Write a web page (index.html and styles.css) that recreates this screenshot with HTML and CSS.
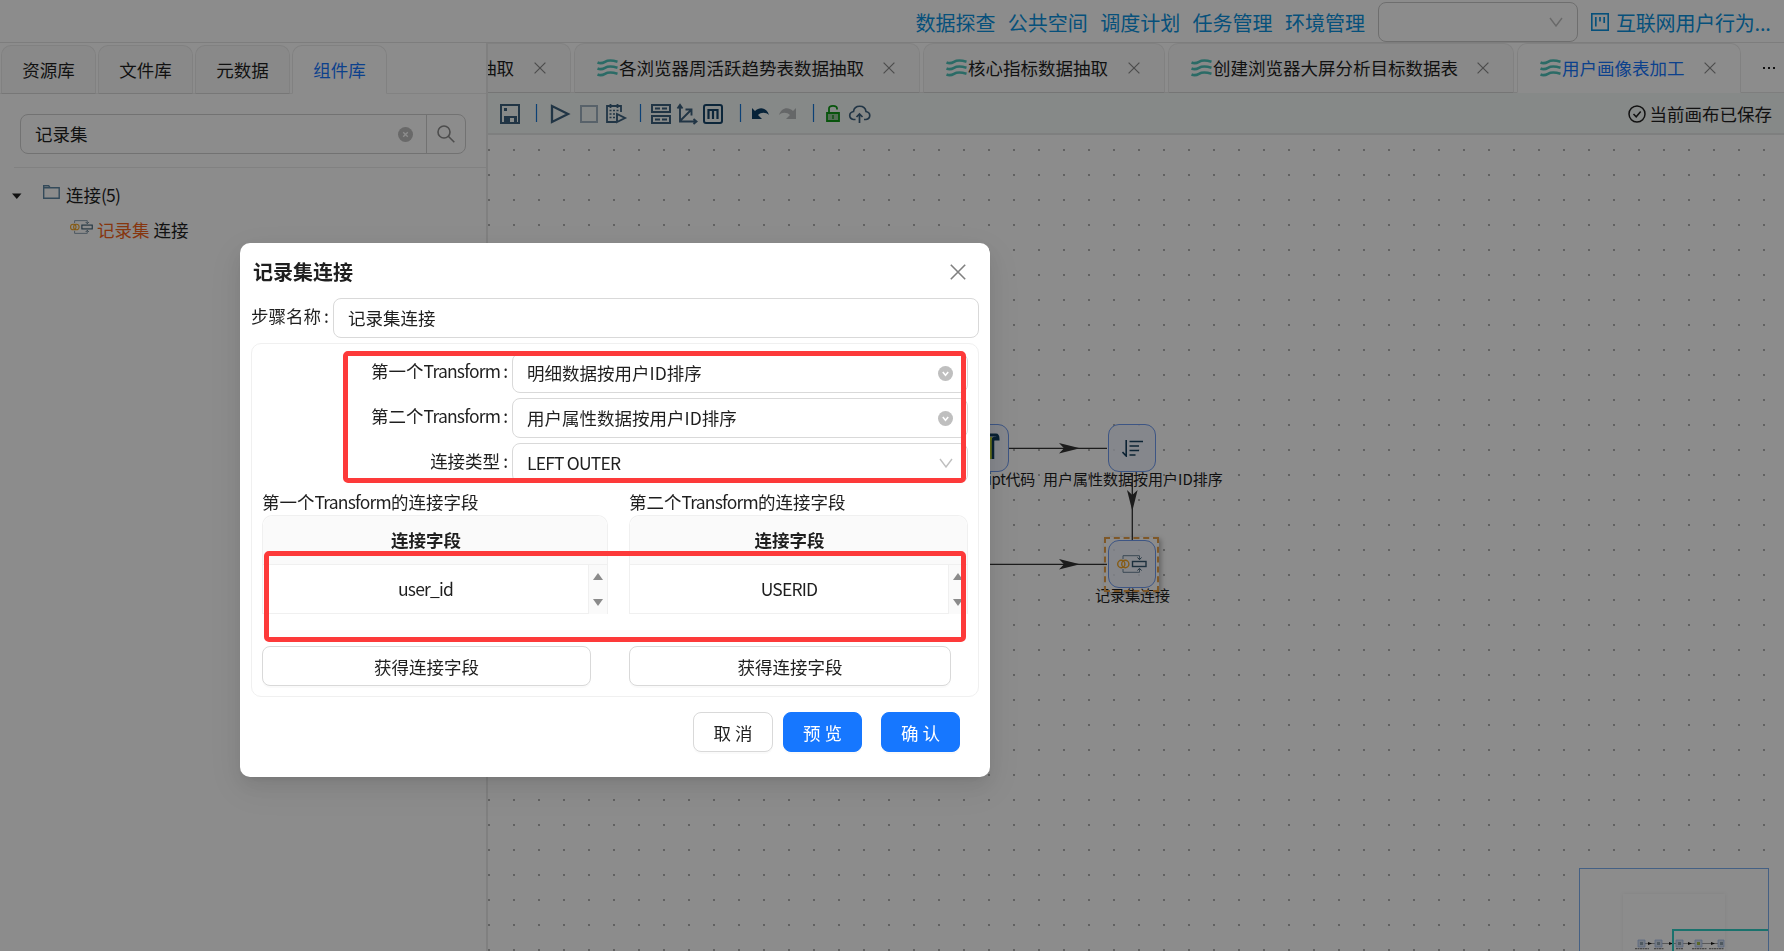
FILE: index.html
```html
<!DOCTYPE html>
<html lang="zh-CN">
<head>
  <meta charset="UTF-8">
  <title>用户画像表加工</title>
  <link rel="stylesheet" href="styles.css">
</head>
<body>

  <!-- shared icons -->
  <svg class="defs">
    <symbol id="wave" viewBox="0 0 21 18">
      <path d="M.5 3.500C3.500 4.800 5.500 4.300 8 2.800S14 .800 20.500 2.800M.5 9.500C3.500 10.800 5.500 10.300 8 8.800S14 6.800 20.500 8.800M.5 15.500C3.500 16.800 5.500 16.300 8 14.800S14 12.800 20.500 14.800" fill="none" stroke="#4fc4bb" stroke-width="2.600"/>
    </symbol>
    <symbol id="close" viewBox="0 0 12 12">
      <path d="M.6.6l10.800 10.800M11.400.6L.6 11.400" fill="none" stroke="currentColor" stroke-width="1.200"/>
    </symbol>
    <symbol id="down" viewBox="0 0 14 10">
      <path d="M1 1l6 8 6-8" fill="none" stroke="currentColor" stroke-width="1.400"/>
    </symbol>
    <symbol id="down-circle" viewBox="0 0 15 15">
      <circle cx="7.500" cy="7.500" r="7.500" fill="#bfbfbf"/>
      <path d="M4.800 6l2.700 3.200L10.200 6" fill="none" stroke="#fff" stroke-width="1.600"/>
    </symbol>
    <symbol id="join" viewBox="0 0 30 18">
      <g fill="none" stroke-width="1.400">
        <ellipse cx="4.300" cy="9" rx="3.600" ry="3.700" stroke="#f5a623"/>
        <ellipse cx="8.300" cy="9" rx="3.600" ry="3.700" stroke="#f5a623"/>
        <path d="M6 4V.7h16.500V4M6 14v3.300h16.500V14" stroke="#6b8499" stroke-width="1"/>
        <path d="M20.500 2.500l2 2.200 2-2.200M20.500 15.500l2-2.200 2 2.200" stroke="#35586f" stroke-width="1"/>
        <rect x="15.500" y="6.500" width="13.500" height="5" stroke="#35586f"/>
      </g>
    </symbol>
  </svg>

  <div class="app">
    <header class="header">
      <nav class="nav">
        <a>数据探查</a><a>公共空间</a><a>调度计划</a><a>任务管理</a><a>环境管理</a>
      </nav>
      <div class="env-select"><svg width="14" height="10"><use href="#down"/></svg></div>
      <a class="project">
        <svg width="18" height="18" viewBox="0 0 18 18" fill="none" stroke="currentColor"><rect x=".8" y=".8" width="16.400" height="16.400" stroke-width="1.600"/><path d="M4.800 4v9.500M9 4v4.500M13.200 4v6" stroke-width="1.700"/></svg>
        <span>互联网用户行为...</span>
      </a>
    </header>

    <div class="main">
      <aside class="sidebar">
        <div class="side-tabs">
          <div class="side-tab">资源库</div>
          <div class="side-tab">文件库</div>
          <div class="side-tab">元数据</div>
          <div class="side-tab active">组件库</div>
        </div>
        <div class="search">
          <span class="search-text">记录集</span>
          <svg class="search-clear" width="15" height="15" viewBox="0 0 15 15"><circle cx="7.500" cy="7.500" r="7.500" fill="#bfbfbf"/><path d="M5.200 5.200l4.600 4.600M9.800 5.200L5.200 9.800" stroke="#fff" stroke-width="1.400"/></svg>
          <span class="search-btn">
            <svg width="18" height="18" viewBox="0 0 18 18" fill="none" stroke="#8c8c8c" stroke-width="1.600"><circle cx="7" cy="7" r="6"/><path d="M11.300 11.300l6 6"/></svg>
          </span>
        </div>
        <div class="tree">
          <div class="tree-row">
            <svg class="caret" width="10" height="6"><path d="M0 .5h9.500L4.800 6z" fill="#1f1f1f"/></svg>
            <svg class="folder" width="17" height="14" viewBox="0 0 17 14" fill="none" stroke="#5f88a5" stroke-width="1.400"><path d="M.7 13.300V.8h5l1.500 2h9v10.500zM.7 2.800h6"/></svg>
            <span>连接<b>(5)</b></span>
          </div>
          <div class="tree-row child">
            <svg width="23" height="14"><use href="#join"/></svg>
            <span><em>记录集</em> 连接</span>
          </div>
        </div>
      </aside>

      <section class="work">
        <div class="tabs">
          <div class="tab tab-cut"><span>抽取</span><svg class="x"><use href="#close"/></svg></div>
          <div class="tab tab-long"><svg class="wave"><use href="#wave"/></svg><span>各浏览器周活跃趋势表数据抽取</span><svg class="x"><use href="#close"/></svg></div>
          <div class="tab tab-mid"><svg class="wave"><use href="#wave"/></svg><span>核心指标数据抽取</span><svg class="x"><use href="#close"/></svg></div>
          <div class="tab tab-long"><svg class="wave"><use href="#wave"/></svg><span>创建浏览器大屏分析目标数据表</span><svg class="x"><use href="#close"/></svg></div>
          <div class="tab active"><svg class="wave"><use href="#wave"/></svg><span>用户画像表加工</span><svg class="x"><use href="#close"/></svg></div>
          <div class="more"><i></i><i></i><i></i></div>
        </div>

        <div class="toolbar">
          <svg class="tools" width="400" height="30" viewBox="0 0 400 30" fill="none" stroke="#3c617e" stroke-width="2">
            <!-- save -->
            <path d="M13 6h18v18H13z"/>
            <path d="M16 9h3v3h-3zM16 17h13v7h-3v-5h-4v5h-6z" fill="#3c617e" stroke="none"/>
            <path d="M48.500 5v18M152.500 5v18M252.500 5v18M325.500 5v18" stroke="#1677d8" stroke-width="1.200"/>
            <!-- run, stop, schedule -->
            <path d="M64 7v16l16-8z" stroke-width="2.300"/>
            <path d="M93 7h16v16H93z" stroke="#a1b3c2"/>
            <path d="M133 13V7h-14v16h9M122.500 5v4M129.500 5v4" stroke-width="1.800"/>
            <path d="M121.500 11.500h2M125 11.500h2M128.500 11.500h2M121.500 15h2M125 15h2M121.500 18.500h2M125 18.500h2" stroke-width="1.600"/>
            <path d="M129 15v8l8-4z" stroke-width="1.900"/>
            <!-- table, axes, mapping -->
            <path d="M164 6h18v7h-18zM164 17h18v7h-18zM167 9.500h5M174 9.500h5M167 20.500h5M174 20.500h5"/>
            <path d="M192 7v15.500h16M192 22l11-11M189.500 9.500L192 6l2.500 3.500M205.500 20l3 2.500-3 2.500M197.500 10.500h6v6" stroke-width="1.900"/>
            <rect x="216" y="6" width="18" height="18" rx="2" stroke="#17456a"/>
            <path d="M220.500 20v-9h9v9M225 11v9" stroke="#17456a" stroke-width="2.200"/>
            <!-- undo, redo -->
            <path d="M264 9v11h10l-4-4c3-3 8-3 11 0-2-7-9-9-14-4z" fill="#0d4068" stroke="none"/>
            <path d="M308 9v11h-10l4-4c-3-3-8-3-11 0 2-7 9-9 14-4z" fill="#b8bcbe" stroke="none"/>
            <!-- unlock, upload -->
            <path d="M339 14h12v8h-12z" fill="#9ac99d" stroke="none"/>
            <path d="M339 14h12v8h-12zM341 14V9.500c0-3.500 8-3.500 8 0v1" stroke="#0f9a17" stroke-width="1.800"/>
            <path d="M345 16v4" stroke="#0f8515" stroke-width="1.300"/>
            <path d="M367.500 20.500h-2c-5-1-5-7 0-8 1-7 11.500-7 12.500 0 5 1 5 7 0 8h-2M371.500 24v-8.500M368.500 18l3-3 3 3" stroke-width="1.700"/>
          </svg>
          <div class="saved">
            <svg width="18" height="18" viewBox="0 0 18 18" fill="none" stroke="#1f1f1f" stroke-width="1.500"><circle cx="9" cy="9" r="8"/><path d="M5.500 9l2.700 2.800 4.500-5.300"/></svg>
            <span>当前画布已保存</span>
          </div>
        </div>

        <div class="canvas">
          <div class="node node-js">
            <svg width="48" height="48" viewBox="0 0 48 48"><path d="M27 13v22" stroke="#b6c92d" stroke-width="8"/><path d="M32 35V17c0-4 4-4 5-2" fill="none" stroke="#0d3a5c" stroke-width="2.500"/><path d="M22 11h13c2 0 2 2 2 4h-6" fill="none" stroke="#0d3a5c" stroke-width="3"/></svg>
          </div>
          <div class="node node-sort">
            <svg width="21" height="17" viewBox="0 0 21 17" fill="none" stroke="#17405f" stroke-width="1.600"><path d="M4.200 0v16L.5 12M7.500 1.500H21M7.500 6h9.500M7.500 10.500H17M7.500 15h6"/></svg>
          </div>
          <div class="node node-join"><svg width="30" height="18"><use href="#join"/></svg></div>
          <svg class="edges" width="1296" height="816" fill="none" stroke="#333" stroke-width="1.300">
            <path d="M521 313.300h98M480 429.300h139M644.300 338v67"/>
            <path d="M571 308l21 5.300-21 5.300 5-5.300zM571 424l21 5.300-21 5.300 5-5.300zM639 355l5.300 21 5.300-21-5.300 5z" fill="#333" stroke="none"/>
          </svg>
          <div class="label label-js">JavaScript代码</div>
          <div class="label label-sort">用户属性数据按用户ID排序</div>
          <div class="label label-join">记录集连接</div>
          <div class="selection"></div>

          <div class="minimap">
            <div class="mini-page"></div>
            <svg width="110" height="14" viewBox="0 0 110 14">
              <path d="M5 4.500h84" stroke="#777" stroke-width=".7"/>
              <path d="M14 3l4 1.500L14 6zM35 3l4 1.500L35 6zM54 3l4 1.500L54 6zM77 3l4 1.500L77 6z" fill="#111"/>
              <path d="M4 1h7v7H4zM21 1h7v7h-7zM42 1h7v7h-7zM61 1h7v7h-7zM84 1h6v7h-6z" fill="#d5e0f0" stroke="#9db8e8" stroke-width=".7"/>
              <path d="M6 3h3v3H6zM23 3h3v3h-3zM44 3h3v3h-3zM86 3h3v3h-3z" fill="#8fa0ae"/>
              <path d="M63 3h3v3h-3z" fill="#a7bd4a"/>
              <path d="M1 9.700h14M20 9.700h10M42 9.700h7M58 9.700h15M75 9.700h15" stroke="#888" stroke-width="1.300" stroke-dasharray="2 .5"/>
            </svg>
            <div class="mini-view"></div>
          </div>
        </div>
      </section>
    </div>
  </div>

  <div class="mask">
    <div class="modal">
      <div class="modal-title">
        <h3>记录集连接</h3>
        <svg width="16" height="16"><use href="#close"/></svg>
      </div>

      <div class="name-row">
        <label>步骤名称<i>:</i></label>
        <div class="input">记录集连接</div>
      </div>

      <div class="panel">
        <div class="form">
          <label>第一个<b>Transform</b><i>:</i></label>
          <div class="input"><span>明细数据按用户ID排序</span><svg width="15" height="15"><use href="#down-circle"/></svg></div>
          <label>第二个<b>Transform</b><i>:</i></label>
          <div class="input"><span>用户属性数据按用户ID排序</span><svg width="15" height="15"><use href="#down-circle"/></svg></div>
          <label>连接类型<i>:</i></label>
          <div class="input"><b>LEFT OUTER</b><svg width="14" height="10"><use href="#down"/></svg></div>
        </div>

        <div class="fields">
          <div class="field">
            <div class="field-title">第一个<b>Transform</b>的连接字段</div>
            <div class="table">
              <div class="th">连接字段</div><div class="th"></div>
              <div class="td"><b>user_id</b></div>
              <div class="scroll"><i class="up"></i><i class="down"></i></div>
            </div>
            <button class="btn">获得连接字段</button>
          </div>
          <div class="field">
            <div class="field-title">第二个<b>Transform</b>的连接字段</div>
            <div class="table">
              <div class="th">连接字段</div><div class="th"></div>
              <div class="td"><b>USERID</b></div>
              <div class="scroll"><i class="up"></i><i class="down"></i></div>
            </div>
            <button class="btn">获得连接字段</button>
          </div>
        </div>
      </div>

      <div class="footer">
        <button class="btn cancel">取 消</button>
        <button class="btn primary">预 览</button>
        <button class="btn primary ok">确 认</button>
      </div>

      <div class="mark mark-form"></div>
      <div class="mark mark-fields"></div>
    </div>
  </div>

</body>
</html>
```
FILE: styles.css
```css
* {
  box-sizing: border-box;
}
body {
  margin: 0;
  height: 951px;
  overflow: hidden;
  font-family: "Noto Sans CJK SC", "Noto Sans", sans-serif;
  font-size: 17.5px;
  line-height: 27.5px;
  color: #1f1f1f;
  white-space: nowrap;
}
i, em {
  font-style: normal;
}
/* latin runs are set a bit tighter */
b {
  font-weight: normal;
  letter-spacing: -0.8px;
}
svg {
  flex: none;
}
.defs {
  position: absolute;
  width: 0;
  height: 0;
}
.app {
  display: flex;
  flex-direction: column;
  height: 951px;
  background: #fff;
}

/* header */
.header {
  display: flex;
  align-items: center;
  justify-content: flex-end;
  height: 43px;
  padding-right: 14px;
  border-bottom: 1px solid #e4e4e4;
  font-size: 20px;
  color: #0b93e0;
}
.nav {
  display: flex;
  gap: 12.4px;
  padding-top: 3px;
}
.env-select {
  display: flex;
  align-items: center;
  justify-content: flex-end;
  width: 200px;
  height: 40px;
  margin: 2px 13px 0 13px;
  padding-right: 14px;
  border: 1px solid #c9c9c9;
  border-radius: 8px;
  color: #bfbfbf;
}
.project {
  display: flex;
  align-items: center;
  gap: 7px;
  width: 179px;
  padding-top: 3px;
}
.project svg {
  margin-top: -1px;
}
.project span {
  letter-spacing: -0.2px;
}

/* sidebar */
.main {
  display: flex;
  flex: 1;
  min-height: 0;
}
.sidebar {
  width: 488px;
  border-right: 2px solid #e9e9e9;
}
.side-tabs {
  display: flex;
  gap: 2px;
  height: 51px;
  padding: 2px 0 0 1px;
  border-bottom: 1px solid #ededed;
}
.side-tab {
  width: 95px;
  height: 49px;
  padding-top: 10px;
  text-align: center;
  background: #fafafa;
  border: 1px solid #ebebeb;
  border-bottom-color: #d9d9d9;
  border-radius: 10px 10px 0 0;
}
.side-tab.active {
  color: #1677ff;
  background: #fff;
  border-bottom-color: #fff;
}
.search {
  display: flex;
  align-items: center;
  width: 446px;
  height: 40px;
  margin: 20px 0 0 20px;
  padding-left: 14px;
  border: 1px solid #d0d0d0;
  border-radius: 8px;
}
.search-clear {
  margin: 0 13px 0 auto;
}
.search-btn {
  display: flex;
  align-items: center;
  justify-content: center;
  width: 39px;
  height: 38px;
  border-left: 1px solid #d0d0d0;
}
.tree {
  margin: 13px 0 0 14px;
  padding-top: 9px;
  border-top: 1px solid #ececec;
}
.tree-row {
  display: flex;
  align-items: center;
  height: 35px;
}
.caret {
  margin: 3px 21px 0 -2px;
}
.folder {
  margin: -5px 6px 0 0;
}
.child {
  gap: 4px;
  padding-left: 56px;
}
.child svg {
  margin-top: -5px;
}
.child em {
  color: #f5631a;
}

/* editor tabs */
.work {
  display: flex;
  flex: 1;
  flex-direction: column;
  min-width: 0;
}
.tabs {
  display: flex;
  gap: 3px;
  height: 50px;
  border-bottom: 1px solid #e6e6e6;
}
.tab {
  display: flex;
  align-items: center;
  width: 224px;
  height: 50px;
  padding: 0 24px 0 22px;
  background: #fafafa;
  border: 1px solid #ececec;
  border-bottom-color: #d5d5d5;
  border-radius: 10px 10px 0 0;
}
.tab-cut {
  justify-content: flex-end;
  width: 83px;
  overflow: hidden;
  border-left: 0;
  border-radius: 0 10px 0 0;
}
.tab-long {
  width: 346px;
}
.tab-mid {
  width: 242px;
}
.tab .wave {
  width: 21px;
  height: 18px;
  margin-right: 1px;
}
.tab .x {
  width: 12px;
  height: 12px;
  margin-left: auto;
  color: #8c8c8c;
}
.tab-cut .x {
  margin-left: 20px;
}
.tab.active {
  color: #1677ff;
  background: #fff;
  border-bottom-color: #fff;
}
.more {
  display: flex;
  align-items: center;
  gap: 3px;
  padding-left: 19px;
}
.more i {
  width: 2px;
  height: 2px;
  background: #1f1f1f;
}

/* toolbar */
.toolbar {
  display: flex;
  align-items: center;
  justify-content: space-between;
  height: 42px;
  padding: 2px 12px 0 0;
  background: #f5f9f7;
  border-bottom: 2px solid #e6e8e8;
}
.saved {
  display: flex;
  align-items: center;
  gap: 4px;
}

/* canvas */
.canvas {
  position: relative;
  flex: 1;
  overflow: hidden;
  background: radial-gradient(circle at 1px 1px, #b0b0b0 0.7px, transparent 1.2px) 0 14px / 25px 25px;
}
.edges {
  position: absolute;
  left: 0;
  top: 0;
}
.node {
  position: absolute;
  display: flex;
  align-items: center;
  justify-content: center;
  width: 48px;
  height: 48px;
  background: rgba(239, 244, 255, 0.8);
  border: 1.5px solid #6f9bf0;
  border-radius: 11px;
}
.node-js {
  left: 473px;
  top: 289px;
}
.node-sort {
  left: 620px;
  top: 289px;
}
.node-join {
  left: 620px;
  top: 405px;
}
.selection {
  position: absolute;
  left: 616px;
  top: 402px;
  width: 55px;
  height: 55px;
  border: 2px dashed #e8a04a;
  box-shadow: 2px 2px 5px rgba(0, 0, 0, 0.3);
}
.label {
  position: absolute;
  font-size: 15px;
  line-height: 20px;
}
.label-js {
  right: 749px;
  top: 334px;
  letter-spacing: -0.3px;
}
.label-sort {
  left: 555px;
  top: 334px;
}
.label-join {
  left: 607px;
  top: 450px;
}
.minimap {
  position: absolute;
  left: 1091px;
  top: 733px;
  width: 190px;
  height: 127px;
  background: #fff;
  border: 1px solid #7db0f0;
}
.minimap svg {
  position: absolute;
  left: 54px;
  top: 70px;
}
.mini-page {
  position: absolute;
  left: 43px;
  top: 25px;
  width: 102px;
  height: 100px;
  box-shadow: 0 0 4px rgba(0, 0, 0, 0.08);
}
.mini-view {
  position: absolute;
  left: 92px;
  top: 60px;
  width: 96px;
  height: 80px;
  border: 2px solid #31d0c6;
  border-right: 0;
}

/* dialog */
.mask {
  position: fixed;
  inset: 0;
  padding: 243px 0 0 240px;
  background: rgba(0, 0, 0, 0.45);
}
.modal {
  position: relative;
  width: 750px;
  height: 534px;
  padding: 13px 11px 0;
  background: #fff;
  border-radius: 10px;
  box-shadow: 0 8px 20px rgba(0, 0, 0, 0.08), 0 4px 8px -5px rgba(0, 0, 0, 0.12), 0 11px 35px 10px rgba(0, 0, 0, 0.05);
}
.modal-title {
  display: flex;
  align-items: center;
  justify-content: space-between;
  height: 32px;
  padding: 0 13px 0 2px;
  color: #808080;
}
.modal-title h3 {
  margin: -1px 0 0;
  font-size: 20px;
  color: #1f1f1f;
}
.name-row {
  display: flex;
  justify-content: space-between;
  margin-top: 10px;
}
.name-row .input {
  width: 646px;
}
label {
  padding-top: 4px;
  text-align: right;
}
label i {
  margin: 0 4px 0 3px;
}
.input {
  display: flex;
  align-items: center;
  justify-content: space-between;
  height: 40px;
  padding: 0 14px;
  border: 1px solid #d9d9d9;
  border-radius: 8px;
  color: #1f1f1f;
}
.input svg {
  color: #bfbfbf;
}
.panel {
  height: 354px;
  margin-top: 5px;
  padding: 9px 10px 0;
  border: 1px solid #f0f0f0;
  border-radius: 10px;
}
.form {
  display: grid;
  grid-template-columns: 250px 456px;
  row-gap: 5px;
}
.fields {
  display: flex;
  gap: 21px;
  margin-top: 4px;
}
.field {
  width: 346px;
}
.field + .field {
  width: 339px;
}
.field-title {
  height: 28px;
  line-height: 29px;
}
.table {
  display: grid;
  grid-template-columns: 1fr 18px;
  grid-template-rows: 49px 49px;
  border: solid #f0f0f0;
  border-width: 1px 1px 0 1px;
  border-radius: 10px 10px 0 0;
}
.th {
  line-height: 47px;
  font-weight: bold;
  text-align: center;
  background: #fafafa;
  border-bottom: 1px solid #f0f0f0;
}
.th:first-child {
  border-radius: 10px 0 0 0;
}
.th:nth-child(2) {
  border-radius: 0 10px 0 0;
}
.td {
  line-height: 47px;
  text-align: center;
  border: solid #f0f0f0;
  border-width: 0 1px 1px 0;
}
.scroll {
  display: flex;
  flex-direction: column;
  align-items: center;
  justify-content: space-between;
  padding: 8px 0;
  background: #fafafa;
}
.up, .down {
  border: 5px solid transparent;
}
.up {
  border-top: 0;
  border-bottom: 7px solid #8b8b8b;
}
.down {
  border-bottom: 0;
  border-top: 7px solid #8b8b8b;
}
.btn {
  height: 40px;
  padding: 1px 0 0;
  font: inherit;
  color: #1f1f1f;
  background: #fff;
  border: 1px solid #d9d9d9;
  border-radius: 8px;
  box-shadow: 0 2px 0 rgba(0, 0, 0, 0.02);
}
.field .btn {
  width: 329px;
  margin-top: 32px;
}
.field + .field .btn {
  width: 322px;
}
.footer {
  display: flex;
  justify-content: flex-end;
  gap: 10px;
  margin-top: 15px;
  padding-right: 19px;
}
.footer .btn {
  width: 79px;
}
.footer .cancel {
  width: 80px;
}
.footer .primary {
  color: #fff;
  background: #1677ff;
  border-color: #1677ff;
}
.footer .ok {
  margin-left: 9px;
}

/* highlighted areas */
.mark {
  position: absolute;
  border: 5px solid #fd3a3a;
  border-radius: 5px;
}
.mark-form {
  left: 103px;
  top: 108px;
  width: 623px;
  height: 132px;
}
.mark-fields {
  left: 24px;
  top: 308px;
  width: 702px;
  height: 91px;
}
```
